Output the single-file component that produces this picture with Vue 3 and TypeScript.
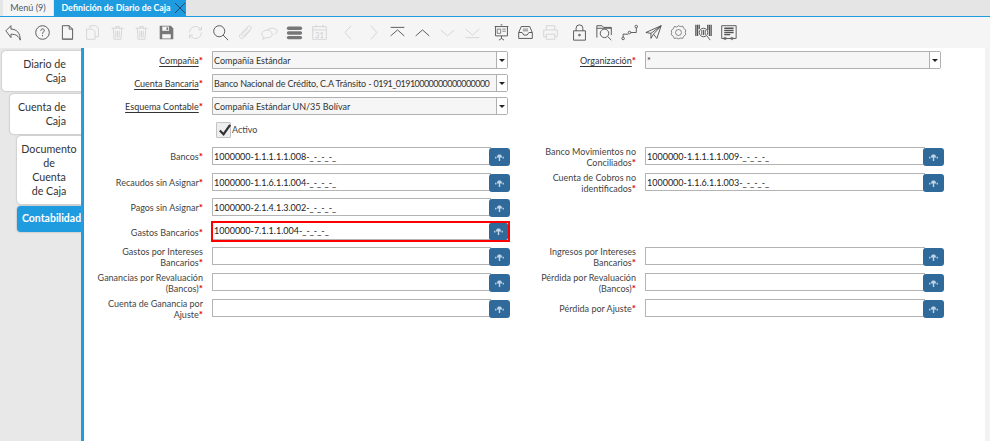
<script setup lang="ts">
type Row = { label: string; value?: string; red?: boolean };
const accountsLeft: Row[] = [
  { label: 'Bancos', value: '1000000-1.1.1.1.1.008-_-_-_-_' },
  { label: 'Recaudos sin Asignar', value: '1000000-1.1.6.1.1.004-_-_-_-_' },
  { label: 'Pagos sin Asignar', value: '1000000-2.1.4.1.3.002-_-_-_-_' },
  { label: 'Gastos Bancarios', value: '1000000-7.1.1.1.004-_-_-_-_', red: true },
  { label: 'Gastos por Intereses Bancarios' },
  { label: 'Ganancias por Revaluación (Bancos)' },
  { label: 'Cuenta de Ganancia por Ajuste' },
];
const accountsRight: (Row | null)[] = [
  { label: 'Banco Movimientos no Conciliados', value: '1000000-1.1.1.1.1.009-_-_-_-_' },
  { label: 'Cuenta de Cobros no identificados', value: '1000000-1.1.6.1.1.003-_-_-_-_' },
  null,
  null,
  { label: 'Ingresos por Intereses Bancarios' },
  { label: 'Pérdida por Revaluación (Bancos)' },
  { label: 'Pérdida por Ajuste' },
];
const pairs = accountsLeft.map((l, i) => ({ l, r: accountsRight[i] }));
const isTwoLine = (label: string) => label.length > 22;
</script>

<template>
  <div class="app">
    <div class="tabbar">
      <div class="tab">Menú (9)</div>
      <div class="tab active">
        <span class="title">Definición de Diario de Caja</span>
        <svg class="close" viewBox="0 0 10 10"><path d="M0 0L10 10M10 0L0 10" /></svg>
      </div>
    </div>

    <div class="toolbar">
      <span class="ic"><svg viewBox="0 0 20 20"><path d="M1 8l6-6v4c7 0 11 5 11 13-2-5-5-7-11-7v4z" class="on" /></svg></span>
      <span class="ic sep"><svg viewBox="0 0 20 20"><circle cx="10" cy="10" r="8" class="on" /><path d="M8 8c0-3 4-3 4-.5 0 2-2 2-2 4M10 13v1.500" class="on" /></svg></span>
      <span class="ic"><svg viewBox="0 0 20 20"><path d="M4 2h8l4 4v12H4zM12 2v4h4" class="on" /><path d="M4 17h12v1H4z" class="fill" /></svg></span>
      <span class="ic"><svg viewBox="0 0 20 20"><path d="M7 5V2h7l3 3v10h-4M3 6h7l3 3v9H3z" class="off" /></svg></span>
      <span class="ic"><svg viewBox="0 0 20 20"><path d="M3 5h14M8 5V3h4v2M5 5l1 13h8l1-13M8 8v8M10 8v8M12 8v8" class="off" /></svg></span>
      <span class="ic"><svg viewBox="0 0 20 20"><path d="M3 5h14M8 5V3h4v2M5 5l1 13h8l1-13M8 8v8M10 8v8M12 8v8" class="off" /></svg></span>
      <span class="ic"><svg viewBox="0 0 20 20"><path d="M2 2h13l3 3v13H2z" class="fill" /><path d="M5 3h8v5H5z" class="cut" /><path d="M5 12h10v5H5z" class="cut" /><path d="M10 4h2v3h-2z" class="fill" /></svg></span>
      <span class="ic sep"><svg viewBox="0 0 20 20"><path d="M3 10a7 7 0 0 1 12-5l2 2M17 3v4h-4M17 10a7 7 0 0 1-12 5l-2-2M3 17v-4h4" class="off" /></svg></span>
      <span class="ic"><svg viewBox="0 0 20 20"><circle cx="8.500" cy="8.500" r="6.500" class="on" /><path d="M13 13l6 6" class="on" /></svg></span>
      <span class="ic"><svg viewBox="0 0 20 20"><path d="M16 7l-8 9c-3 3-7-1-4-4l9-9c2-2 5 1 3 3l-8 8c-1 1-3-1-2-2l7-7" class="off" /></svg></span>
      <span class="ic"><svg viewBox="0 0 20 20"><path d="M7 8c2-4 11-4 12 0 0 2-1 3-3 4M8 7c-4 0-7 2-7 5 0 2 2 3 2 3l-1 3 4-2c5 1 8-2 7-5-1-3-3-4-5-4z" class="off" /></svg></span>
      <span class="ic"><svg viewBox="0 0 20 20"><rect x="1" y="3" width="18" height="4" rx="2" class="fill" /><rect x="1" y="8.500" width="18" height="4" rx="2" class="fill" /><rect x="1" y="14" width="18" height="4" rx="2" class="fill" /></svg></span>
      <span class="ic"><svg viewBox="0 0 20 20"><path d="M2 3h16v15H2zM2 7h16M6 1v3M14 1v3" class="off" /><text x="10" y="16" class="cal">31</text></svg></span>
      <span class="ic sep"><svg viewBox="0 0 20 20"><path d="M13 2L6 10l7 8" class="off" /></svg></span>
      <span class="ic"><svg viewBox="0 0 20 20"><path d="M7 2l7 8-7 8" class="off" /></svg></span>
      <span class="ic"><svg viewBox="0 0 20 20"><path d="M2 4h16M2 14l8-7 8 7" class="on" /></svg></span>
      <span class="ic"><svg viewBox="0 0 20 20"><path d="M2 14l8-7 8 7" class="on" /></svg></span>
      <span class="ic"><svg viewBox="0 0 20 20"><path d="M2 7l8 7 8-7" class="off" /></svg></span>
      <span class="ic"><svg viewBox="0 0 20 20"><path d="M2 16h16M2 6l8 7 8-7" class="off" /></svg></span>
      <span class="ic sep"><svg viewBox="0 0 20 20"><path d="M2 3h16M3 3v11h14V3M10 14v3M7 19l3-2 3 2M9 1h2" class="on" /><path d="M5 6h4v5H5zM11 6h4M11 8.500h4" class="on thin" /></svg></span>
      <span class="ic"><svg viewBox="0 0 20 20"><path d="M5 3h10l3 7v7H2v-7zM2 10h4l2 3h4l2-3h4" class="on" /><path d="M7 6h6M7 8h6" class="on thin" /></svg></span>
      <span class="ic"><svg viewBox="0 0 20 20"><path d="M5 7V2h10v5M5 15H2V7h16v8h-3M5 12h10v6H5z" class="off" /></svg></span>
      <span class="ic sep"><svg viewBox="0 0 20 20"><path d="M6 8V5a4 4 0 0 1 8 0v3M3 8h14v11H3z" class="on" /><circle cx="10" cy="13" r="1.600" class="fill" /></svg></span>
      <span class="ic"><svg viewBox="0 0 20 20"><path d="M1 16V2h6l2 2h9v9M1 5h17" class="on" /><circle cx="10" cy="11" r="5" class="on" /><path d="M14 15l4 4" class="on" /></svg></span>
      <span class="ic"><svg viewBox="0 0 20 20"><circle cx="2.500" cy="17" r="1.500" class="on" /><circle cx="10" cy="10" r="1.500" class="on" /><circle cx="18" cy="3" r="1.500" class="on" /><path d="M2.500 15.500V12h6M11.500 10H18V4.500" class="on" /></svg></span>
      <span class="ic"><svg viewBox="0 0 20 20"><path d="M1 10L19 2l-5 15-4-5-3 5v-6zM7 11l12-9M10 12l9-10" class="on" /></svg></span>
      <span class="ic"><svg viewBox="0 0 20 20"><path d="M10 2l2 1 3-.5 1 2.500 2.500 2L18 10l.5 2.500-2.500 2-1 2.500-3-.5-2 1-2-1-3 .5-1-2.500-2.500-2L2 10l-.5-2.500 2.500-2 1-2.500 3 .5z" class="on thin" /><circle cx="10" cy="10" r="3.500" class="on thin" /></svg></span>
      <span class="ic"><svg viewBox="0 0 20 20"><path d="M1 1v13M3 1v13M5 1v5M15 1v6M17 1v13M19 1v13" class="on wide" /><circle cx="10" cy="10" r="5" class="on" /><path d="M8 7v6M10 7v6M12 7v6" class="on" /><path d="M14 14l4 5" class="on" /></svg></span>
      <span class="ic"><svg viewBox="0 0 20 20"><path d="M2 2h17v15H2z" class="on" /><path d="M5 5h11M5 7.500h11M5 10h11M5 12.500h7" class="on wide" /><circle cx="6" cy="17" r="1.500" class="on thin" /><circle cx="14" cy="17" r="1.500" class="on thin" /></svg></span>
    </div>

    <div class="main">
      <nav class="side">
        <div class="stab t1">Diario de Caja</div>
        <div class="stab t2">Cuenta de Caja</div>
        <div class="stab t3">Documento<br />de<br />Cuenta<br />de Caja</div>
        <div class="stab t4">Contabilidad</div>
      </nav>

      <div class="form">
        <div class="grid top">
          <label class="lbl"><span><span class="u">Compañía</span><i>*</i></span></label>
          <div class="select"><span class="txt">Compañía Estándar</span><b class="drop"></b></div>
          <label class="lbl"><span><span class="u">Organización</span><i>*</i></span></label>
          <div class="select org"><span class="txt">*</span><b class="drop"></b></div>

          <label class="lbl"><span><span class="u">Cuenta Bancaria</span><i>*</i></span></label>
          <div class="select"><span class="txt"><span class="loose">Banco Nacional de Crédito, C.A Tránsito - </span><span class="tight">0191_01910000000000000000</span></span><b class="drop"></b></div>
          <span></span><span></span>

          <label class="lbl"><span><span class="u">Esquema Contable</span><i>*</i></span></label>
          <div class="select"><span class="txt">Compañía Estándar UN/35 Bolívar</span><b class="drop"></b></div>
        </div>

        <div class="active-row">
          <span class="check"><svg viewBox="0 0 16 16"><path d="M3 8l4 4 7-10" /></svg></span>
          <span class="active-text">Activo</span>
        </div>

        <div class="accounts">
          <div v-for="(p, i) in pairs" :key="i" class="grid line" :class="'r' + i">
            <label class="lbl"><span :class="{ two: isTwoLine(p.l.label) }">{{ p.l.label }}<i>*</i></span></label>
            <div class="search" :class="{ red: p.l.red }">
              <span class="box">{{ p.l.value }}</span>
              <button class="go"><svg viewBox="0 0 10 8"><path d="M2.500 2C3 0 7 0 7.500 2L8 4H5.800V8H4.200V4H2zM0 3h1.500v2H0zM8.500 3H10v2H8.500z" /></svg></button>
            </div>
            <template v-if="p.r">
              <label class="lbl"><span :class="{ two: isTwoLine(p.r.label) }">{{ p.r.label }}<i>*</i></span></label>
              <div class="search">
                <span class="box">{{ p.r.value }}</span>
                <button class="go"><svg viewBox="0 0 10 8"><path d="M2.500 2C3 0 7 0 7.500 2L8 4H5.800V8H4.200V4H2zM0 3h1.500v2H0zM8.500 3H10v2H8.500z" /></svg></button>
              </div>
            </template>
          </div>
        </div>
      </div>

      <div class="scroll"></div>
    </div>
  </div>
</template>

<style>
html, body { margin: 0; padding: 0; background: #fff; }
</style>

<style scoped>
.app {
  width: 990px;
  height: 441px;
  overflow: hidden;
  display: flex;
  flex-direction: column;
  font-family: Lato, "Open Sans", sans-serif;
  font-size: 9px;
  color: #333;
}
.tabbar {
  height: 16px;
  background: #e5e5e5;
  border-bottom: 1px solid #1f9ce0;
  display: flex;
  padding-left: 3px;
}
.tab {
  background: #f5f5f5;
  color: #4a5a70;
  width: 50px;
  text-align: center;
  line-height: 16px;
  font-size: 9px;
}
.active {
  margin-left: 1px;
  width: 132px;
  background: #1f9ce0;
  color: #fff;
  font-weight: 700;
  font-size: 8.800px;
  display: flex;
  align-items: center;
  padding-left: 7px;
  box-sizing: border-box;
}
.title { white-space: nowrap; width: 110px; flex: none; }
.close {
  width: 10px;
  height: 10px;
  margin-left: 4px;
  fill: none;
  stroke: #1b4a6b;
  stroke-width: 1;
  flex: none;
}
.toolbar {
  height: 31px;
  background: #f5f5f5;
  display: flex;
  align-items: center;
  padding-left: 1.600px;
}
.ic {
  width: 24.800px;
  flex: none;
  display: flex;
  justify-content: center;
}
.ic svg { width: 17px; height: 17px; }
.sep { margin-left: 4px; }
.on, .off, .cut { fill: none; stroke-width: 1.100; stroke-linejoin: round; }
.on { stroke: #555; }
.off { stroke: #d4d4d4; }
.thin { stroke-width: 0.800; }
.wide { stroke-width: 1.500; }
.fill { fill: #777; stroke: none; }
.cut { fill: #f5f5f5; stroke: none; }
.cal { font-size: 9px; text-anchor: middle; fill: #ccc; font-family: Lato, sans-serif; }
.main {
  flex: 1;
  display: flex;
  min-height: 0;
}
.side {
  width: 81px;
  flex: none;
  background: #e8e8e8;
  border-right: 3px solid #1f9ce0;
  display: flex;
  flex-direction: column;
  align-items: flex-end;
  padding-top: 3px;
}
.stab {
  background: #fff;
  border-radius: 4px 0 0 4px;
  box-sizing: border-box;
  font-size: 10.700px;
  line-height: 14px;
  color: #333;
  box-shadow: 0 0 2px #999;
}
.t1 { width: 79px; height: 40px; padding: 6px 15px 0 14px; text-align: right; }
.t2 { width: 71px; height: 40px; margin-top: 3px; padding: 6px 15px 0 4px; text-align: right; }
.t3 { width: 64px; height: 68px; margin-top: 2px; padding: 6px 0 0 0; text-align: center; }
.t4 {
  width: 64px;
  height: 26px;
  margin-top: 2px;
  background: #1f9ce0;
  color: #fff;
  font-weight: 700;
  line-height: 24px;
  white-space: nowrap;
  overflow: hidden;
  padding-left: 5px;
  font-size: 10.500px;
}
.form {
  flex: 1;
  padding-top: 3px;
  min-width: 0;
}
.grid {
  display: grid;
  grid-template-columns: 119px 307px 126px 308px;
}
.top { grid-auto-rows: 23px; }
.lbl {
  height: 18px;
  display: flex;
  align-items: center;
  justify-content: flex-end;
  text-align: right;
  line-height: 11px;
  color: #444;
}
.lbl > span { display: block; max-width: 106px; }
.lbl > span.two { margin-top: 2px; }
.lbl i { color: #e00000; font-style: normal; font-weight: 700; font-size: 10px; }
.u { color: #333; text-decoration: underline; text-underline-offset: 2px; }
.select {
  margin-left: 9px;
  height: 18px;
  width: 296px;
  border: 1px solid #b0b0b0;
  border-radius: 0 2px 2px 0;
  background: #f6f6f6;
  box-sizing: border-box;
  display: flex;
  align-items: center;
}
.txt {
  flex: 1;
  min-width: 0;
  padding-left: 1px;
  white-space: nowrap;
  overflow: hidden;
}
.loose { letter-spacing: -0.12px; }
.tight { letter-spacing: -0.55px; }
.drop {
  width: 10px;
  height: 16px;
  flex: none;
  border-left: 1px solid #b0b0b0;
  background: #fff;
  position: relative;
}
.drop::after {
  content: "";
  position: absolute;
  left: 2px;
  top: 7px;
  border: 3px solid transparent;
  border-top: 3px solid #222;
}
.active-row {
  height: 27px;
  box-sizing: border-box;
  padding: 2px 0 0 132px;
  display: flex;
  align-items: flex-start;
  gap: 1px;
}
.check {
  width: 15px;
  height: 16px;
  border: 1px solid #c4c4c4;
  background: #eee;
  box-sizing: border-box;
  border-radius: 1px;
}
.check svg {
  width: 15px;
  height: 15px;
  fill: none;
  stroke: #333;
  stroke-width: 2.400;
  display: block;
}
.active-text { color: #444; line-height: 16px; }
.line { height: 26px; }
.r1, .r2 { height: 25px; }
.r3 { height: 24px; }
.search {
  margin-left: 9px;
  height: 18px;
  position: relative;
  display: flex;
}
.box {
  flex: 1;
  min-width: 0;
  margin-right: 19px;
  border: 1px solid #b4b4b4;
  box-sizing: border-box;
  height: 18px;
  line-height: 17px;
  padding-left: 1px;
  background: #fff;
  white-space: nowrap;
  overflow: hidden;
  color: #222;
}
.go {
  position: absolute;
  right: 0;
  top: 1px;
  width: 21px;
  height: 18px;
  background: #2f6a9b;
  border: 0;
  border-radius: 3px;
  padding: 0;
  display: flex;
  align-items: center;
  justify-content: center;
}
.go svg { width: 9px; height: 7px; fill: #c3d5e4; }
.red {
  margin: -2px 0 0 8px;
  height: 21px;
  border: 2px solid #f00;
  box-sizing: border-box;
}
.red .box {
  margin-right: 17px;
  height: 17px;
  line-height: 16px;
  border: 0;
  border-bottom: 1px solid #b4b4b4;
  padding-left: 1px;
}
.red .go { top: 0; width: 19px; height: 17px; border-radius: 2px; }
.scroll {
  width: 5px;
  flex: none;
  background: #f2f2f2;
}
</style>
